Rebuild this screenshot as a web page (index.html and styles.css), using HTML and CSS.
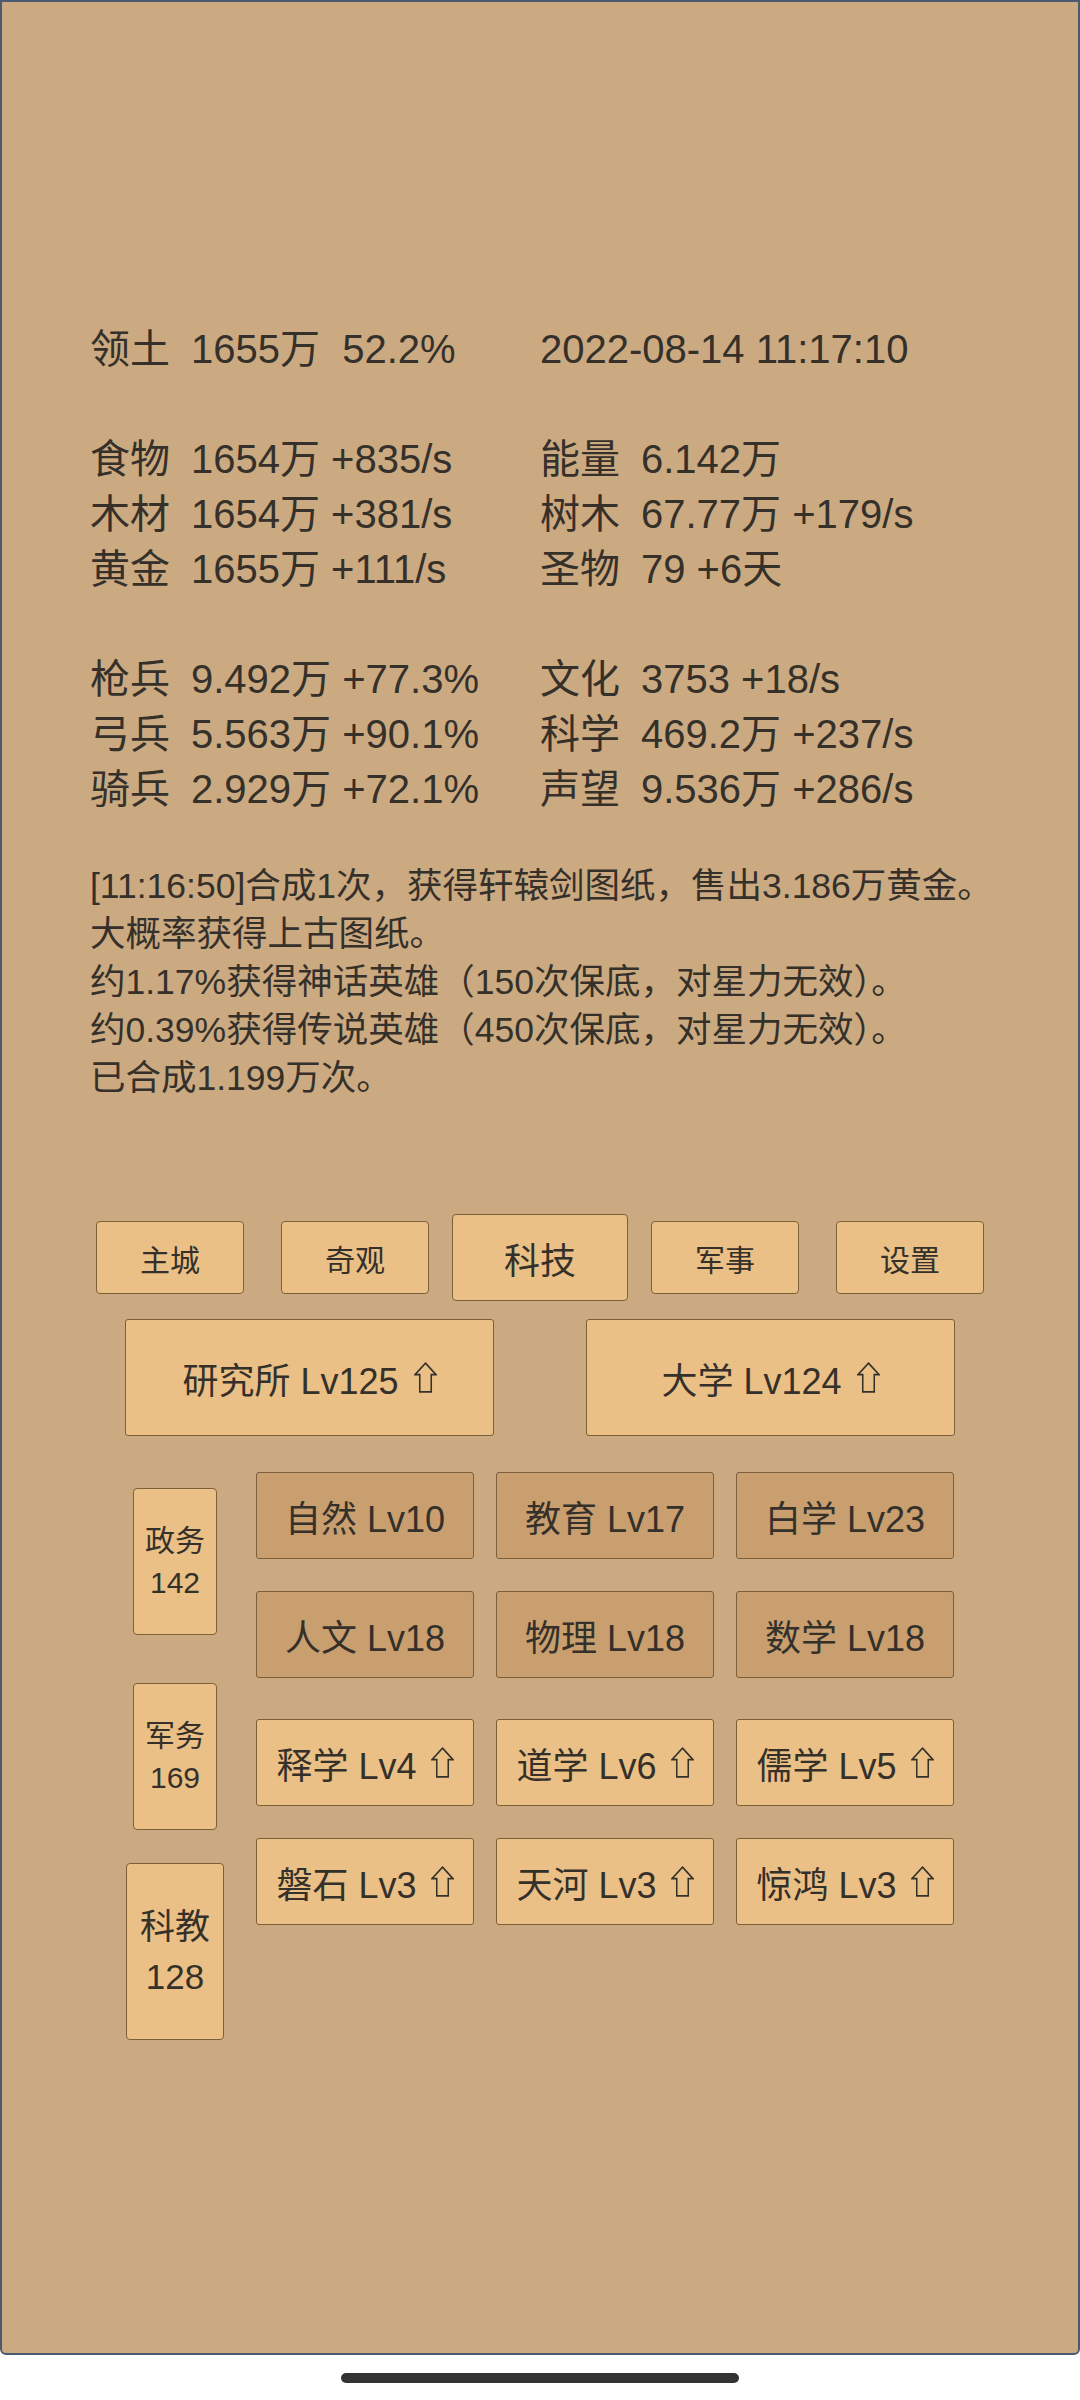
FILE: index.html
```html
<!DOCTYPE html>
<html lang="zh-CN">
<head>
<meta charset="utf-8">
<title>科技</title>
<link rel="stylesheet" href="styles.css">
</head>
<body>
<div class="frame">
  <div class="stats">
    <div class="lbl">领土</div><div class="val">1655万&nbsp;&nbsp;52.2%</div><div class="date">2022-08-14 11:17:10</div>
    <div class="blank"></div>
    <div class="lbl">食物</div><div class="val">1654万 +835/s</div><div class="lbl">能量</div><div class="val">6.142万</div>
    <div class="lbl">木材</div><div class="val">1654万 +381/s</div><div class="lbl">树木</div><div class="val">67.77万 +179/s</div>
    <div class="lbl">黄金</div><div class="val">1655万 +111/s</div><div class="lbl">圣物</div><div class="val">79 +6天</div>
    <div class="blank"></div>
    <div class="lbl">枪兵</div><div class="val">9.492万 +77.3%</div><div class="lbl">文化</div><div class="val">3753 +18/s</div>
    <div class="lbl">弓兵</div><div class="val">5.563万 +90.1%</div><div class="lbl">科学</div><div class="val">469.2万 +237/s</div>
    <div class="lbl">骑兵</div><div class="val">2.929万 +72.1%</div><div class="lbl">声望</div><div class="val">9.536万 +286/s</div>
  </div>

  <div class="log">
    <p>[11:16:50]合成1次，获得轩辕剑图纸，售出3.186万黄金。</p>
    <p>大概率获得上古图纸。</p>
    <p>约1.17%获得神话英雄（150次保底，对星力无效）。</p>
    <p>约0.39%获得传说英雄（450次保底，对星力无效）。</p>
    <p>已合成1.199万次。</p>
  </div>

  <nav class="tabs">
    <div class="tab">主城</div>
    <div class="tab">奇观</div>
    <div class="tab active">科技</div>
    <div class="tab">军事</div>
    <div class="tab">设置</div>
  </nav>

  <div class="bigrow">
    <div class="big"><span>研究所 Lv125</span><svg class="up" viewBox="0 0 24 32"><polygon points="12,1 23,13 18,13 18,31 6,31 6,13 1,13"/></svg></div>
    <div class="big"><span>大学 Lv124</span><svg class="up" viewBox="0 0 24 32"><polygon points="12,1 23,13 18,13 18,31 6,31 6,13 1,13"/></svg></div>
  </div>

  <div class="lower">
    <div class="side">
      <div class="slot"><div class="sidebtn">政务<br>142</div></div>
      <div class="slot"><div class="sidebtn">军务<br>169</div></div>
      <div class="slot"><div class="sidebtn active">科教<br>128</div></div>
    </div>
    <div class="techs">
      <div class="grid">
        <div class="tech done">自然 Lv10</div>
        <div class="tech done">教育 Lv17</div>
        <div class="tech done">白学 Lv23</div>
        <div class="tech done">人文 Lv18</div>
        <div class="tech done">物理 Lv18</div>
        <div class="tech done">数学 Lv18</div>
      </div>
      <div class="grid second">
        <div class="tech"><span>释学 Lv4</span><svg class="up" viewBox="0 0 24 32"><polygon points="12,1 23,13 18,13 18,31 6,31 6,13 1,13"/></svg></div>
        <div class="tech"><span>道学 Lv6</span><svg class="up" viewBox="0 0 24 32"><polygon points="12,1 23,13 18,13 18,31 6,31 6,13 1,13"/></svg></div>
        <div class="tech"><span>儒学 Lv5</span><svg class="up" viewBox="0 0 24 32"><polygon points="12,1 23,13 18,13 18,31 6,31 6,13 1,13"/></svg></div>
        <div class="tech"><span>磐石 Lv3</span><svg class="up" viewBox="0 0 24 32"><polygon points="12,1 23,13 18,13 18,31 6,31 6,13 1,13"/></svg></div>
        <div class="tech"><span>天河 Lv3</span><svg class="up" viewBox="0 0 24 32"><polygon points="12,1 23,13 18,13 18,31 6,31 6,13 1,13"/></svg></div>
        <div class="tech"><span>惊鸿 Lv3</span><svg class="up" viewBox="0 0 24 32"><polygon points="12,1 23,13 18,13 18,31 6,31 6,13 1,13"/></svg></div>
      </div>
    </div>
  </div>
</div>
<div class="homebar"><div class="handle"></div></div>
</body>
</html>
```

FILE: styles.css
```css
* { box-sizing: border-box; }
html, body {
  margin: 0;
  padding: 0;
  background: #ffffff;
}
body {
  width: 1080px;
  font-family: "Liberation Sans", "Noto Sans CJK SC", sans-serif;
  color: #35302a;
}
.frame {
  width: 1080px;
  height: 2355px;
  background: #cbaa81;
  border: 2px solid #4b5a70;
  border-radius: 0 0 6px 6px;
  padding-top: 320px;
}
.stats {
  display: grid;
  grid-template-columns: 101px 349px 101px auto;
  grid-auto-rows: 55px;
  margin-left: 88px;
  font-size: 40px;
  line-height: 55px;
  white-space: nowrap;
}
.stats .date { grid-column: 3 / 5; }
.stats .blank { grid-column: 1 / 5; }

.log {
  margin: 45px 0 0 88px;
  font-size: 35.5px;
  line-height: 48px;
  white-space: nowrap;
}
.log p { margin: 0; }

.tabs {
  display: grid;
  grid-template-columns: repeat(5, 185px);
  width: 925px;
  height: 87px;
  margin: 112px auto 0;
  align-items: center;
  justify-items: center;
}
.tab {
  width: 148px;
  height: 73px;
  display: flex;
  align-items: center;
  justify-content: center;
  background: #eac086;
  border: 1.5px solid #7d5f3c;
  border-radius: 4px;
  font-size: 30px;
}
.tab.active {
  width: 176px;
  height: 87px;
  font-size: 36px;
}

.bigrow {
  display: flex;
  justify-content: center;
  gap: 92px;
  margin-top: 18px;
}
.big {
  width: 369px;
  height: 117px;
  display: flex;
  align-items: center;
  justify-content: center;
  gap: 15px;
  background: #eac086;
  border: 1.5px solid #7d5f3c;
  border-radius: 3px;
  font-size: 36px;
}
.up {
  width: 23px;
  height: 31px;
  flex: none;
}
.up polygon {
  fill: none;
  stroke: #35302a;
  stroke-width: 1.6;
  stroke-linejoin: miter;
}

.lower {
  display: flex;
  margin-top: 28px;
  margin-left: 123px;
  gap: 31px;
}
.side {
  width: 100px;
  display: flex;
  flex-direction: column;
}
.slot {
  height: 195px;
  display: flex;
  align-items: center;
  justify-content: center;
}
.sidebtn {
  width: 84px;
  height: 147px;
  display: flex;
  align-items: center;
  justify-content: center;
  text-align: center;
  background: #eac086;
  border: 1.5px solid #7d5f3c;
  border-radius: 4px;
  font-size: 30px;
  line-height: 42px;
}
.sidebtn.active {
  width: 98px;
  height: 177px;
  font-size: 35px;
  line-height: 50px;
}

.techs { padding-top: 8px; }
.grid {
  display: grid;
  grid-template-columns: repeat(3, 218px);
  grid-auto-rows: 87px;
  column-gap: 22px;
  row-gap: 32px;
}
.grid.second { margin-top: 41px; }
.tech {
  display: flex;
  align-items: center;
  justify-content: center;
  gap: 14px;
  background: #eac086;
  border: 1.5px solid #7d5f3c;
  border-radius: 3px;
  font-size: 36px;
  white-space: nowrap;
}
.tech.done { background: #c99f6f; }

.homebar {
  height: 45px;
  display: flex;
  justify-content: center;
  padding-top: 18px;
}
.handle {
  width: 398px;
  height: 10px;
  border-radius: 5px;
  background: #333333;
}
```
